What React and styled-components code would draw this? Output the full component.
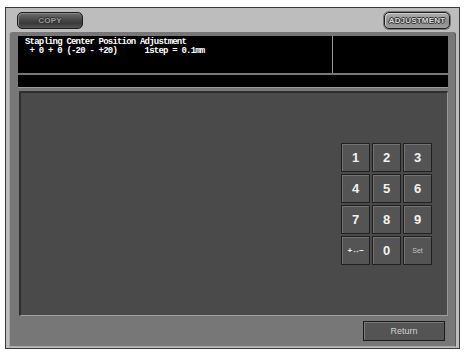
import React from 'react'
import styled, { createGlobalStyle } from 'styled-components'

const GlobalStyle = createGlobalStyle`
    html, body {
        margin: 0;
        padding: 0;
        background: #fff;
    }
`

const KEYS = ['1', '2', '3', '4', '5', '6', '7', '8', '9', '+↔−', '0', 'Set']

const App = () => {
    return (
        <>
        <GlobalStyle />
        <Screen>
            <TopBar>
                <TabButton>COPY</TabButton>
                <TabButton active>ADJUSTMENT</TabButton>
            </TopBar>
            <Body>
                <Header>
                    <Message>
                        <div>Stapling Center Position Adjustment</div>
                        <div>{' + 0 + 0 (-20 - +20)      1step = 0.1mm'}</div>
                    </Message>
                    <Side />
                </Header>
                <Strip />
                <Panel>
                    <Keypad>
                        {KEYS.map((k) => (
                            <Key key={k} kind={k === 'Set' ? 'set' : k.length > 1 ? 'sign' : 'digit'}>{k}</Key>
                        ))}
                    </Keypad>
                </Panel>
                <Footer>
                    <ReturnButton>Return</ReturnButton>
                </Footer>
            </Body>
        </Screen>
        </>
    )
}

export default App

const Screen = styled.div`
    box-sizing: border-box;
    margin: 7px 0 0 5px;
    width: 455px;
    height: 342px;
    border: 1px solid #3a3a3a;
    background: #bdbdbd;
    display: flex;
    flex-direction: column;
    font-family: "Liberation Sans", Arial, sans-serif;
`

const TopBar = styled.div`
    height: 24px;
    display: flex;
    justify-content: space-between;
    align-items: center;
    padding: 0 9px 0 11px;
    flex-shrink: 0;
`

const TabButton = styled.div`
    box-sizing: border-box;
    width: 66px;
    height: 17px;
    border-radius: 5px;
    border: 1px solid #1e1e1e;
    display: flex;
    align-items: center;
    justify-content: center;
    font-size: 8px;
    font-weight: bold;
    letter-spacing: 0.2px;
    color: ${(p) => (p.active ? '#d8d8d8' : '#9a9a9a')};
    text-shadow: -1px 0 0 #333, 1px 0 0 #333, 0 -1px 0 #333, 0 1px 0 #333;
    background: ${(p) =>
        p.active
            ? 'linear-gradient(#b0b0b0, #8c8c8c 55%, #9c9c9c)'
            : 'linear-gradient(#6e6e6e, #454545 50%, #3a3a3a 70%, #555)'};
    box-shadow: ${(p) => (p.active ? '0 0 0 1px #777, inset 1px 1px 0 #cfcfcf' : 'inset 1px 1px 0 #888')};
`

const Body = styled.div`
    flex: 1;
    margin: 0 3px 1px 3px;
    background: #777;
    border-top-left-radius: 3px;
    border-top-right-radius: 3px;
    border-left: 1px solid #a8a8a8;
    border-bottom: 1px solid #a8a8a8;
    border-right: 1px solid #5a5a5a;
    display: flex;
    flex-direction: column;
    padding: 4px 7px 0 8px;
`

const Header = styled.div`
    height: 37px;
    display: grid;
    grid-template-columns: 314px 1fr;
    gap: 1px;
    background: #9a9a9a;
    flex-shrink: 0;
`

const Message = styled.div`
    background: #000;
    color: #fff;
    font-family: "Liberation Mono", "DejaVu Sans Mono", monospace;
    font-size: 9px;
    font-weight: bold;
    letter-spacing: -0.8px;
    line-height: 9px;
    white-space: pre;
    padding: 2px 0 0 7px;
`

const Side = styled.div`
    background: #000;
`

const Strip = styled.div`
    height: 12px;
    background: #000;
    margin-top: 2px;
    border-bottom: 1px solid #9a9a9a;
    flex-shrink: 0;
`

const Panel = styled.div`
    flex: 1;
    margin: 3px 0 0 1px;
    background: #4a4a4a;
    border-left: 2px solid #2e2e2e;
    border-top: 2px solid #2e2e2e;
    border-right: 1px solid #9a9a9a;
    border-bottom: 1px solid #a0a0a0;
    display: flex;
    justify-content: flex-end;
    align-items: flex-start;
    padding: 50px 15px 0 0;
`

const Keypad = styled.div`
    display: grid;
    grid-template-columns: repeat(3, 29px);
    grid-auto-rows: 29px;
    gap: 2px;
`

const Key = styled.div`
    box-sizing: border-box;
    background: #545454;
    border: 1px solid #1f1f1f;
    box-shadow: inset 1px 1px 0 #727272;
    display: flex;
    align-items: center;
    justify-content: center;
    color: ${(p) => (p.kind === 'set' ? '#c0c0c0' : '#f2f2f2')};
    font-size: ${(p) => (p.kind === 'digit' ? '13px' : p.kind === 'sign' ? '8px' : '7px')};
    font-weight: ${(p) => (p.kind === 'set' ? 'normal' : 'bold')};
    letter-spacing: ${(p) => (p.kind === 'sign' ? '-0.5px' : '0')};
`

const Footer = styled.div`
    height: 30px;
    display: flex;
    justify-content: flex-end;
    align-items: center;
    padding-right: 3px;
    flex-shrink: 0;
`

const ReturnButton = styled.div`
    box-sizing: border-box;
    width: 82px;
    height: 20px;
    background: #545454;
    border: 1px solid #1a1a1a;
    box-shadow: inset 1px 1px 0 #7a7a7a;
    display: flex;
    align-items: center;
    justify-content: center;
    color: #d0d0d0;
    font-size: 9px;
`
